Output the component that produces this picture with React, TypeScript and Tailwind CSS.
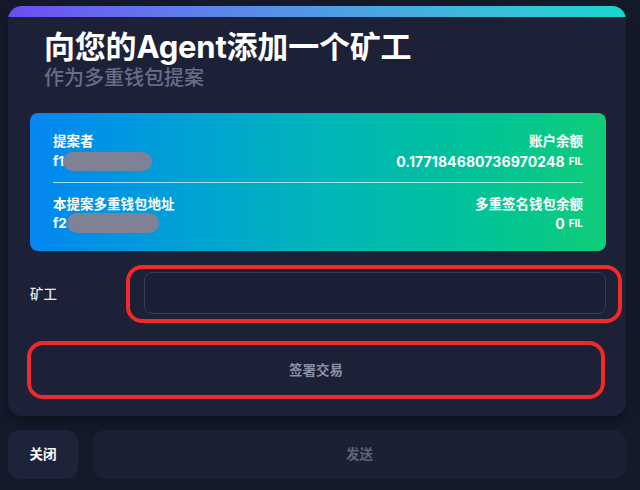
import React from "react";

export default function App() {
  return (
    <div className="w-[640px] h-[490px] overflow-hidden bg-[#151a2b] font-['Inter','Noto_Sans_CJK_SC',sans-serif]">
      <div className="pt-[6px] pl-[8px]">
        <div className="w-[618px] rounded-[14px] overflow-hidden bg-[#1c2138] shadow-[0_6px_14px_rgba(0,0,0,0.35)]">
          <div className="h-[11px] bg-gradient-to-r from-[#6c4cf3] via-[#4f9ae6] to-[#12d8cf]" />
          <div className="pt-[12px] pl-[36px]">
            <div className="text-[31px] leading-[36px] font-bold text-white tracking-[-0.2px]">向您的Agent添加一个矿工</div>
            <div className="text-[20px] leading-[26px] font-medium text-[#676d86]">作为多重钱包提案</div>
          </div>
          <div className="mt-[22px] mx-[22px] w-[576px] rounded-[8px] bg-gradient-to-r from-[#0786f2] via-[#00b5b9] to-[#10cd78] pt-[19px] pb-[18px] px-[23px] text-white">
            <div className="flex justify-between">
              <div>
                <div className="text-[13.5px] leading-[18px] font-semibold">提案者</div>
                <div className="mt-[1px] h-[20px] flex items-center">
                  <span className="text-[13.5px] font-bold leading-[18px]">f1</span>
                  <span className="ml-[-1px] w-[89px] h-[19px] rounded-full bg-[#7f8194]" />
                </div>
              </div>
              <div className="flex flex-col items-end">
                <div className="text-[13.5px] leading-[18px] font-semibold">账户余额</div>
                <div className="mt-[1px] h-[20px] flex items-center">
                  <span className="text-[14px] font-bold tracking-[0.1px]">0.177184680736970248</span>
                  <span className="ml-[4px] text-[10px] font-bold">FIL</span>
                </div>
              </div>
            </div>
            <div className="mt-[11px] h-px bg-[#c8f4f4]/80" />
            <div className="mt-[12px] flex justify-between">
              <div>
                <div className="text-[13.5px] leading-[18px] font-semibold">本提案多重钱包地址</div>
                <div className="h-[20px] flex items-center">
                  <span className="text-[13.5px] font-bold leading-[18px]">f2</span>
                  <span className="ml-[0px] w-[92px] h-[20px] rounded-full bg-[#7f8194]" />
                </div>
              </div>
              <div className="flex flex-col items-end">
                <div className="text-[13.5px] leading-[18px] font-semibold">多重签名钱包余额</div>
                <div className="h-[20px] flex items-center">
                  <span className="text-[14px] font-bold">0</span>
                  <span className="ml-[4px] text-[10px] font-bold">FIL</span>
                </div>
              </div>
            </div>
          </div>
          <div className="mt-[14px] ml-[22px] flex items-center">
            <div className="w-[96px] text-[13.5px] text-[#e8eaf0] font-medium">矿工</div>
            <div className="w-[496px] h-[58px] border-[4px] border-[#f2292b] rounded-[16px] pl-[14px] pr-[12px] pt-[3px]">
              <div className="h-[42px] rounded-[8px] border border-[#363c55] bg-[#1b2036]" />
            </div>
          </div>
          <div className="mt-[18px] ml-[19px] w-[578px] h-[58px] border-[4px] border-[#f2292b] rounded-[16px] flex items-center justify-center">
            <span className="text-[13.5px] font-semibold text-[#8a90a6]">签署交易</span>
          </div>
          <div className="h-[17px]" />
        </div>
      </div>
      <div className="mt-[14px] pl-[8px] flex gap-[15px]">
        <div className="w-[70px] h-[49px] rounded-[12px] bg-[#1d2339] flex items-center justify-center text-[13.5px] font-semibold text-white">关闭</div>
        <div className="w-[533px] h-[49px] rounded-[12px] bg-[#1b2035] flex items-center justify-center text-[13.5px] font-semibold text-[#5e647a]">发送</div>
      </div>
    </div>
  );
}
